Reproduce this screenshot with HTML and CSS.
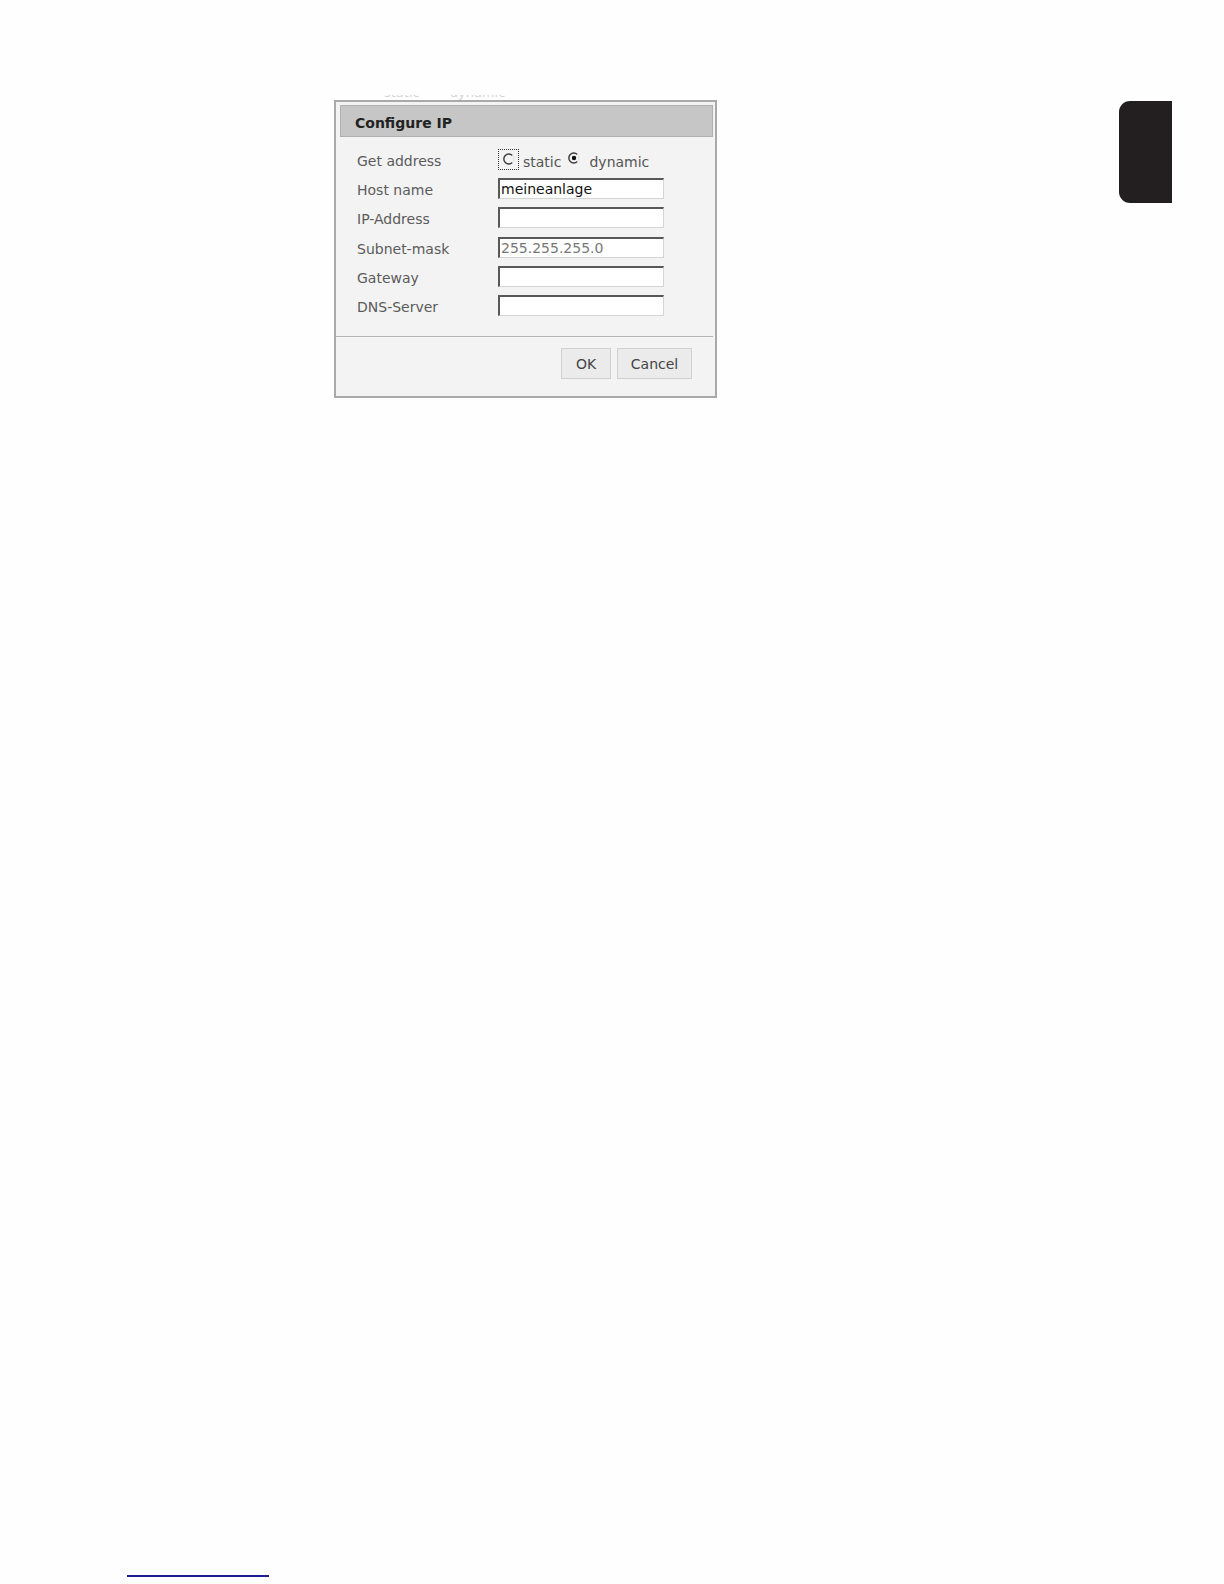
FILE: index.html
```html
<!DOCTYPE html>
<html lang="en">
<head>
<meta charset="utf-8">
<title>Configure IP</title>
<link rel="stylesheet" href="styles.css">
</head>
<body>
<div class="page">
  <div class="top">
    <div class="left-col">
      <div class="ghost"><span class="ghost-line"><span>static</span><span>dynamic</span></span></div>
      <div class="dialog">
        <div class="dialog-head">Configure IP</div>
        <div class="form">
          <div class="label">Get address</div>
          <div class="field radios">
            <span class="radio-focus">
              <svg class="radio" width="12" height="12" viewBox="0 0 12 12"><path d="M9.3 2.4 A5 5 0 1 0 9.3 9.6" fill="none" stroke="#3a3a3a" stroke-width="1.4"/><path d="M9.3 2.4 A5 5 0 0 1 9.3 9.6" fill="none" stroke="#e2e2e2" stroke-width="1"/></svg>
            </span>
            <span class="opt">static</span>
            <svg class="radio radio-on" width="12" height="12" viewBox="0 0 12 12"><path d="M9.3 2.4 A5 5 0 1 0 9.3 9.6" fill="none" stroke="#3a3a3a" stroke-width="1.4"/><path d="M9.3 2.4 A5 5 0 0 1 9.3 9.6" fill="none" stroke="#e2e2e2" stroke-width="1"/><circle cx="6" cy="6" r="2.2" fill="#111"/></svg>
            <span class="opt opt-dyn">dynamic</span>
          </div>
          <div class="label">Host name</div>
          <div class="field"><div class="input">meineanlage</div></div>
          <div class="label">IP-Address</div>
          <div class="field"><div class="input"></div></div>
          <div class="label">Subnet-mask</div>
          <div class="field"><div class="input muted">255.255.255.0</div></div>
          <div class="label">Gateway</div>
          <div class="field"><div class="input"></div></div>
          <div class="label">DNS-Server</div>
          <div class="field"><div class="input"></div></div>
        </div>
        <div class="sep"></div>
        <div class="buttons">
          <div class="btn btn-ok">OK</div>
          <div class="btn btn-cancel">Cancel</div>
        </div>
      </div>
    </div>
    <div class="tab"></div>
  </div>
  <div class="footer-line"></div>
</div>
</body>
</html>
```

FILE: styles.css
```css
html, body {
  margin: 0;
  padding: 0;
  background: #fefefe;
}
body {
  font-family: "DejaVu Sans", Verdana, sans-serif;
}
.page {
  min-height: 1584px;
  box-sizing: border-box;
  display: flex;
  flex-direction: column;
  padding-bottom: 7px;
}
.top {
  display: flex;
  align-items: flex-start;
}
.left-col {
  margin-left: 334px;
  padding-top: 95px;
  display: flex;
  flex-direction: column;
}
.ghost {
  height: 5px;
  overflow: hidden;
  padding-left: 50px;
}
.ghost-line {
  display: flex;
  gap: 30px;
  margin-top: -9px;
  font-size: 13px;
  line-height: 14px;
  color: #d4d4d4;
}
.dialog {
  width: 383px;
  box-sizing: border-box;
  border: 2px solid #a9a9a9;
  background: #f3f3f3;
  display: flex;
  flex-direction: column;
}
.dialog-head {
  margin: 3px 2px 0 4px;
  height: 32px;
  box-sizing: border-box;
  background: #c6c6c6;
  border: 1px solid #b0b0b0;
  padding: 3px 0 0 14px;
  font-weight: bold;
  font-size: 14px;
  color: #222;
  display: flex;
  align-items: center;
}
.form {
  margin-top: 8px;
  padding-left: 21px;
  display: grid;
  grid-template-columns: 141px 170px;
  grid-auto-rows: 29.2px;
  align-items: center;
}
.label {
  font-size: 14px;
  color: #5b5b5b;
  padding-top: 3px;
}
.field {
  display: flex;
  align-items: center;
}
.radios {
  font-size: 14px;
  color: #555;
  white-space: nowrap;
}
.radio-focus {
  width: 21px;
  height: 21px;
  box-sizing: border-box;
  border: 1px dotted #333;
  padding: 3px 0 0 4px;
  display: flex;
  align-items: flex-start;
}
.radio {
  display: block;
}
.opt {
  margin-left: 4px;
  padding-top: 4px;
}
.radio-on {
  margin-left: 7px;
  margin-top: -4px;
}
.opt-dyn {
  margin-left: 9px;
}
.input {
  width: 166px;
  height: 21px;
  box-sizing: border-box;
  background: #fff;
  border: 1px solid #d4d4d4;
  border-top: 2px solid #585858;
  border-left: 2px solid #585858;
  font-size: 14px;
  color: #111;
  padding-left: 1px;
  line-height: 19px;
}
.input.muted {
  color: #777;
}
.sep {
  margin-top: 16px;
  height: 1px;
  background: #b4b4b4;
  margin-right: 2px;
}
.buttons {
  display: flex;
  justify-content: flex-end;
  gap: 6px;
  padding: 11px 23px 17px 0;
}
.btn {
  height: 31px;
  box-sizing: border-box;
  background: #ebebeb;
  border: 1px solid #d0d0d0;
  font-size: 14px;
  color: #444;
  display: flex;
  align-items: center;
  justify-content: center;
}
.btn-ok {
  width: 50px;
}
.btn-cancel {
  width: 75px;
}
.tab {
  margin-left: auto;
  margin-right: 52px;
  margin-top: 101px;
  width: 53px;
  height: 102px;
  background: #231f20;
  border-radius: 11px 0 0 11px;
}
.footer-line {
  margin-top: auto;
  margin-left: 127px;
  width: 142px;
  height: 2px;
  background: #1d1d8f;
}
```
